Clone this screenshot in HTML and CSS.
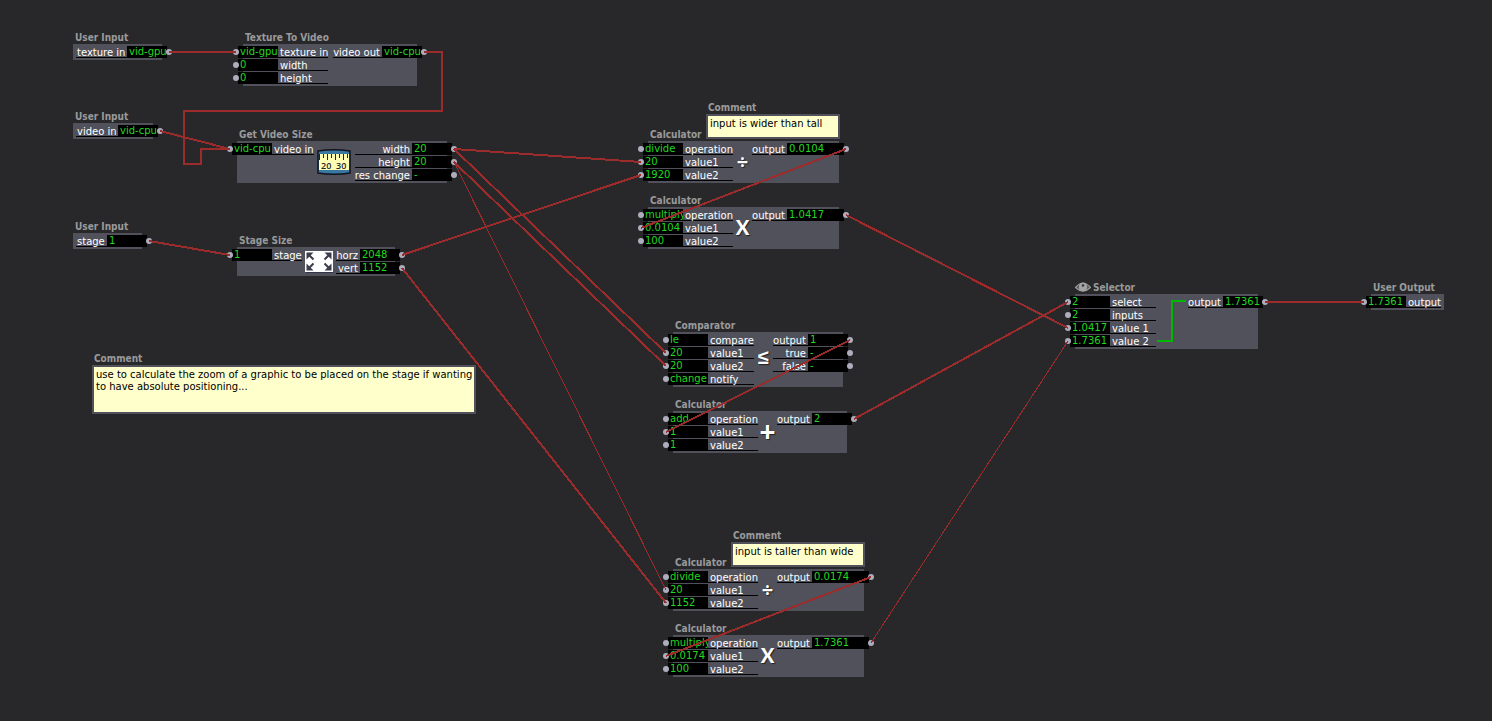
FILE: index.html
```html
<!DOCTYPE html>
<html lang="en">
<head>
<meta charset="utf-8">
<title>Zoom Calculator Patch</title>
<link rel="stylesheet" href="styles.css">
</head>
<body>
<main class="canvas">

  <section class="node user-texture">
    <h2 class="title">User Input</h2>
    <div class="body">
      <div class="outs">
        <div class="port"><label class="name" for="ut1">texture in</label><output class="value" id="ut1">vid-gpu</output><i class="dot"></i></div>
      </div>
    </div>
  </section>

  <section class="node user-video">
    <h2 class="title">User Input</h2>
    <div class="body">
      <div class="outs">
        <div class="port"><label class="name" for="uv1">video in</label><output class="value" id="uv1">vid-cpu</output><i class="dot"></i></div>
      </div>
    </div>
  </section>

  <section class="node user-stage">
    <h2 class="title">User Input</h2>
    <div class="body">
      <div class="outs">
        <div class="port"><label class="name" for="us1">stage</label><output class="value" id="us1">1</output><i class="dot"></i></div>
      </div>
    </div>
  </section>

  <section class="node texture-to-video">
    <h2 class="title">Texture To Video</h2>
    <div class="body">
      <div class="ins">
        <div class="port"><i class="dot"></i><input class="value" id="tv1" value="vid-gpu"><label class="name" for="tv1">texture in</label></div>
        <div class="port"><i class="dot"></i><input class="value" id="tv2" value="0"><label class="name" for="tv2">width</label></div>
        <div class="port"><i class="dot"></i><input class="value" id="tv3" value="0"><label class="name" for="tv3">height</label></div>
      </div>
      <div class="outs">
        <div class="port"><label class="name" for="tv4">video out</label><output class="value" id="tv4">vid-cpu</output><i class="dot"></i></div>
      </div>
    </div>
  </section>

  <section class="node video-size">
    <h2 class="title">Get Video Size</h2>
    <div class="body">
      <div class="ins">
        <div class="port"><i class="dot"></i><input class="value" id="vs1" value="vid-cpu"><label class="name" for="vs1">video in</label></div>
      </div>
      <div class="symbol">
        <svg width="34" height="26" viewBox="0 0 34 26" aria-hidden="true">
          <path d="M1 2Q17-0.500 33 2V24Q17 26.500 1 24Z" fill="#3a78a4" stroke="#10141c" stroke-width="1.500"/>
          <path d="M2 5H32V21H2Z" fill="#ffffb4"/>
          <path d="M2.500 5v6M6.500 5v4M10.500 5v6M14.500 5v4M18.500 5v6M22.500 5v4M26.500 5v6M30.500 5v4" stroke="#222" fill="none"/>
          <text x="4" y="20" class="ruler-digits">20</text>
          <text x="19" y="20" class="ruler-digits">30</text>
        </svg>
      </div>
      <div class="outs">
        <div class="port"><label class="name" for="vs2">width</label><output class="value" id="vs2">20</output><i class="dot"></i></div>
        <div class="port"><label class="name" for="vs3">height</label><output class="value" id="vs3">20</output><i class="dot"></i></div>
        <div class="port"><label class="name" for="vs4">res change</label><output class="value" id="vs4">-</output><i class="dot"></i></div>
      </div>
    </div>
  </section>

  <section class="node stage-size">
    <h2 class="title">Stage Size</h2>
    <div class="body">
      <div class="ins">
        <div class="port"><i class="dot"></i><input class="value" id="ss1" value="1"><label class="name" for="ss1">stage</label></div>
      </div>
      <div class="symbol">
        <svg width="28" height="22" viewBox="0 0 28 22" aria-hidden="true">
          <path d="M1 1H28V22H1Z" fill="#33334a"/>
          <path d="M0 0H28V21H0Z" fill="#fff"/>
          <g fill="#3c3c4c" stroke="#3c3c4c">
            <path d="M1.500 1.500H8.500L1.500 8.500Z" stroke="none"/>
            <path d="M26.500 1.500H19.500L26.500 8.500Z" stroke="none"/>
            <path d="M1.500 19.500H8.500L1.500 12.500Z" stroke="none"/>
            <path d="M26.500 19.500H19.500L26.500 12.500Z" stroke="none"/>
            <path d="M4 4L8.500 8.500M24 4L19.500 8.500M4 17L8.500 12.500M24 17L19.500 12.500" stroke-width="2" fill="none"/>
          </g>
        </svg>
      </div>
      <div class="outs">
        <div class="port"><label class="name" for="ss2">horz</label><output class="value" id="ss2">2048</output><i class="dot"></i></div>
        <div class="port"><label class="name" for="ss3">vert</label><output class="value" id="ss3">1152</output><i class="dot"></i></div>
      </div>
    </div>
  </section>

  <section class="node comment comment-zoom">
    <label class="title" for="cm1">Comment</label>
    <textarea class="note" id="cm1" spellcheck="false">use to calculate the zoom of a graphic to be placed on the stage if wanting to have absolute positioning...</textarea>
  </section>

  <section class="node comment comment-wide">
    <label class="title" for="cm2">Comment</label>
    <textarea class="note" id="cm2" spellcheck="false">input is wider than tall</textarea>
  </section>

  <section class="node comment comment-tall">
    <label class="title" for="cm3">Comment</label>
    <textarea class="note" id="cm3" spellcheck="false">input is taller than wide</textarea>
  </section>

  <section class="node calc wide-divide">
    <h2 class="title">Calculator</h2>
    <div class="body">
      <div class="ins">
        <div class="port"><i class="dot"></i><input class="value" id="wd1" value="divide"><label class="name" for="wd1">operation</label></div>
        <div class="port"><i class="dot"></i><input class="value" id="wd2" value="20"><label class="name" for="wd2">value1</label></div>
        <div class="port"><i class="dot"></i><input class="value" id="wd3" value="1920"><label class="name" for="wd3">value2</label></div>
      </div>
      <div class="symbol">÷</div>
      <div class="outs">
        <div class="port"><label class="name" for="wd4">output</label><output class="value" id="wd4">0.0104</output><i class="dot"></i></div>
      </div>
    </div>
  </section>

  <section class="node calc wide-multiply">
    <h2 class="title">Calculator</h2>
    <div class="body">
      <div class="ins">
        <div class="port"><i class="dot"></i><input class="value" id="wm1" value="multiply"><label class="name" for="wm1">operation</label></div>
        <div class="port"><i class="dot"></i><input class="value" id="wm2" value="0.0104"><label class="name" for="wm2">value1</label></div>
        <div class="port"><i class="dot"></i><input class="value" id="wm3" value="100"><label class="name" for="wm3">value2</label></div>
      </div>
      <div class="symbol times">X</div>
      <div class="outs">
        <div class="port"><label class="name" for="wm4">output</label><output class="value" id="wm4">1.0417</output><i class="dot"></i></div>
      </div>
    </div>
  </section>

  <section class="node comparator">
    <h2 class="title">Comparator</h2>
    <div class="body">
      <div class="ins">
        <div class="port"><i class="dot"></i><input class="value" id="co1" value="le"><label class="name" for="co1">compare</label></div>
        <div class="port"><i class="dot"></i><input class="value" id="co2" value="20"><label class="name" for="co2">value1</label></div>
        <div class="port"><i class="dot"></i><input class="value" id="co3" value="20"><label class="name" for="co3">value2</label></div>
        <div class="port"><i class="dot"></i><input class="value" id="co4" value="change"><label class="name" for="co4">notify</label></div>
      </div>
      <div class="symbol">≤</div>
      <div class="outs">
        <div class="port"><label class="name" for="co5">output</label><output class="value" id="co5">1</output><i class="dot"></i></div>
        <div class="port"><label class="name" for="co6">true</label><output class="value" id="co6">-</output><i class="dot"></i></div>
        <div class="port"><label class="name" for="co7">false</label><output class="value" id="co7">-</output><i class="dot"></i></div>
      </div>
    </div>
  </section>

  <section class="node adder">
    <h2 class="title">Calculator</h2>
    <div class="body">
      <div class="ins">
        <div class="port"><i class="dot"></i><input class="value" id="ad1" value="add"><label class="name" for="ad1">operation</label></div>
        <div class="port"><i class="dot"></i><input class="value" id="ad2" value="1"><label class="name" for="ad2">value1</label></div>
        <div class="port"><i class="dot"></i><input class="value" id="ad3" value="1"><label class="name" for="ad3">value2</label></div>
      </div>
      <div class="symbol plus">+</div>
      <div class="outs">
        <div class="port"><label class="name" for="ad4">output</label><output class="value" id="ad4">2</output><i class="dot"></i></div>
      </div>
    </div>
  </section>

  <section class="node calc tall-divide">
    <h2 class="title">Calculator</h2>
    <div class="body">
      <div class="ins">
        <div class="port"><i class="dot"></i><input class="value" id="td1" value="divide"><label class="name" for="td1">operation</label></div>
        <div class="port"><i class="dot"></i><input class="value" id="td2" value="20"><label class="name" for="td2">value1</label></div>
        <div class="port"><i class="dot"></i><input class="value" id="td3" value="1152"><label class="name" for="td3">value2</label></div>
      </div>
      <div class="symbol">÷</div>
      <div class="outs">
        <div class="port"><label class="name" for="td4">output</label><output class="value" id="td4">0.0174</output><i class="dot"></i></div>
      </div>
    </div>
  </section>

  <section class="node calc tall-multiply">
    <h2 class="title">Calculator</h2>
    <div class="body">
      <div class="ins">
        <div class="port"><i class="dot"></i><input class="value" id="tm1" value="multiply"><label class="name" for="tm1">operation</label></div>
        <div class="port"><i class="dot"></i><input class="value" id="tm2" value="0.0174"><label class="name" for="tm2">value1</label></div>
        <div class="port"><i class="dot"></i><input class="value" id="tm3" value="100"><label class="name" for="tm3">value2</label></div>
      </div>
      <div class="symbol times">X</div>
      <div class="outs">
        <div class="port"><label class="name" for="tm4">output</label><output class="value" id="tm4">1.7361</output><i class="dot"></i></div>
      </div>
    </div>
  </section>

  <section class="node selector">
    <h2 class="title with-icon">
      <svg width="16" height="12" viewBox="0 0 16 12" aria-hidden="true">
        <path d="M0.500 6.500Q8-2.500 15.500 6.500Q8 13.500 0.500 6.500Z" fill="#58585c" stroke="#9c9c9c" stroke-width="1.200"/>
        <circle cx="8" cy="6" r="4.200" fill="#a4a4a4"/>
        <circle cx="8" cy="4.500" r="1.200" fill="#333"/>
      </svg>
      Selector
    </h2>
    <div class="body">
      <div class="ins">
        <div class="port"><i class="dot"></i><input class="value" id="se1" value="2"><label class="name" for="se1">select</label></div>
        <div class="port"><i class="dot"></i><input class="value" id="se2" value="2"><label class="name" for="se2">inputs</label></div>
        <div class="port"><i class="dot"></i><input class="value" id="se3" value="1.0417"><label class="name" for="se3">value 1</label></div>
        <div class="port"><i class="dot"></i><input class="value" id="se4" value="1.7361"><label class="name" for="se4">value 2</label></div>
      </div>
      <div class="symbol">
        <svg width="30" height="51" viewBox="0 0 30 51" aria-hidden="true">
          <path d="M0 45H15V5H29" fill="none" stroke="#00b800" stroke-width="2"/>
        </svg>
      </div>
      <div class="outs">
        <div class="port"><label class="name" for="se5">output</label><output class="value" id="se5">1.7361</output><i class="dot"></i></div>
      </div>
    </div>
  </section>

  <section class="node user-output">
    <h2 class="title">User Output</h2>
    <div class="body">
      <div class="ins">
        <div class="port"><i class="dot"></i><input class="value" id="uo1" value="1.7361"><label class="name" for="uo1">output</label></div>
      </div>
    </div>
  </section>

  <svg class="wires" aria-hidden="true">
    <path d="M169 52H236"/>
    <path d="M424 52H442V111H184V164H201V149H230"/>
    <path d="M160 131L230 149"/>
    <path d="M149 241L230 255"/>
    <path d="M454 149L641 162"/>
    <path d="M454 149L666 353"/>
    <path d="M454 162L666 366"/>
    <path class="thin" d="M454 162L666 590"/>
    <path d="M402 255L641 175"/>
    <path d="M402 268L666 603"/>
    <path d="M846 149L641 228"/>
    <path d="M846 215L1068 328"/>
    <path d="M850 340L666 432"/>
    <path d="M854 419L1068 302"/>
    <path d="M871 577L666 656"/>
    <path class="thin" d="M871 643L1068 341"/>
    <path d="M1265 302H1364"/>
  </svg>
</main>
</body>
</html>
```

FILE: styles.css
```css
* {
  box-sizing: border-box;
}

body {
  margin: 0;
  background: #28282b;
  font-family: "DejaVu Sans", sans-serif;
  font-size: 10px;
  line-height: 14px;
}

.canvas {
  position: relative;
  min-height: 100vh;
  overflow: hidden;
}

/* Nodes sit freely on the patch canvas */
.node {
  position: absolute;
}

.title {
  display: block;
  height: 13px;
  margin: 0;
  padding-left: 2px;
  font-family: "DejaVu Sans Condensed", "Noto Sans", sans-serif;
  font-size: 10px;
  font-weight: bold;
  line-height: 14px;
  color: #9a9a9a;
  white-space: nowrap;
}

.with-icon {
  display: flex;
  gap: 2px;
  padding-left: 0;
}

.body {
  display: flex;
  justify-content: space-between;
  padding: 2px 0;
  background: #51515b;
}

.ins,
.outs {
  display: flex;
  flex-direction: column;
  gap: 1px;
}

.ins {
  margin-left: -10px;
}

.outs {
  margin-right: -10px;
}

.port {
  display: flex;
  height: 12px;
}

.dot {
  z-index: 1;
  flex: none;
  align-self: center;
  width: 6px;
  height: 6px;
  border-radius: 50%;
  background: #adadbd;
}

.ins .dot {
  margin-right: -1px;
}

.outs .dot {
  margin-left: -1px;
}

.name {
  flex: 1;
  padding: 0 0 0 2px;
  border-bottom: 1px solid #000;
  color: #fff;
  white-space: nowrap;
}

.outs .name {
  padding: 0 2px 0 0;
  text-align: right;
}

.value {
  flex: none;
  width: 40px;
  height: 12px;
  margin: 0;
  padding: 0 0 0 2px;
  border: 0;
  background: #000;
  color: #22d822;
  font-family: "DejaVu Sans", sans-serif;
  font-size: 10px;
  line-height: 12px;
  white-space: nowrap;
  overflow: hidden;
}

.calc .outs .value {
  width: 57px;
}

.symbol {
  display: flex;
  flex: 1;
  align-items: center;
  justify-content: center;
  font-family: "Noto Sans", sans-serif;
  font-size: 20px;
  font-weight: bold;
  line-height: 20px;
  color: #fff;
  text-shadow: 1px 1px 1px #222;
}

.symbol svg {
  flex: none;
}

.times {
  padding-bottom: 2px;
  font-family: Lato, sans-serif;
  font-weight: 900;
}

.comparator .symbol {
  padding-bottom: 6px;
}

.plus {
  padding-bottom: 2px;
  font-size: 28px;
}

.ruler-digits {
  font-family: "Open Sans", sans-serif;
  font-size: 9px;
  font-weight: 600;
  fill: #223;
  text-shadow: none;
}

.note {
  display: block;
  width: 100%;
  margin: 0;
  padding: 2px 0 2px 2px;
  border: 2px solid #51515b;
  background: #ffffcc;
  color: #000;
  font-family: "DejaVu Sans", sans-serif;
  font-size: 10px;
  line-height: 12px;
  resize: none;
  overflow: hidden;
}

.user-texture { left: 73px; top: 31px; width: 89px; }
.user-video { left: 73px; top: 110px; width: 80px; }
.user-stage { left: 73px; top: 220px; width: 69px; }

.user-texture .outs,
.user-video .outs,
.user-stage .outs {
  flex: 1;
  padding-left: 3px;
}

.user-texture .name,
.user-video .name,
.user-stage .name {
  padding: 0 0 0 1px;
  text-align: left;
}

.texture-to-video { left: 243px; top: 31px; width: 174px; }
.video-size { left: 237px; top: 128px; width: 210px; }
.stage-size { left: 237px; top: 234px; width: 158px; }
.wide-divide { left: 648px; top: 128px; width: 191px; }
.wide-multiply { left: 648px; top: 194px; width: 191px; }
.comparator { left: 673px; top: 319px; width: 170px; }
.adder { left: 673px; top: 398px; width: 174px; }
.tall-divide { left: 673px; top: 556px; width: 191px; }
.tall-multiply { left: 673px; top: 622px; width: 191px; }
.selector { left: 1075px; top: 281px; width: 183px; }
.user-output { left: 1371px; top: 281px; width: 73px; }

.selector .ins .name { min-width: 46px; }

.comment-zoom { left: 92px; top: 352px; width: 384px; }
.comment-wide { left: 706px; top: 101px; width: 134px; }
.comment-tall { left: 731px; top: 529px; width: 134px; }

.comment-zoom .note { height: 49px; }
.comment-wide .note,
.comment-tall .note { height: 25px; }

.wires {
  position: absolute;
  z-index: 2;
  inset: 0;
  width: 100%;
  height: 100%;
  overflow: visible;
  pointer-events: none;
  fill: none;
  stroke: #9c2c2c;
  stroke-width: 2;
  shape-rendering: crispEdges;
}

.wires .thin {
  stroke-width: 1;
}
```
